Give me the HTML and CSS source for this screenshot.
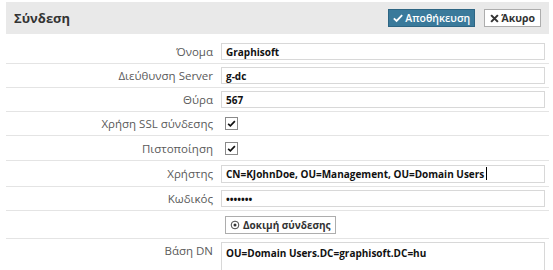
FILE: index.html
```html
<!DOCTYPE html>
<html lang="el">
<head>
<meta charset="utf-8">
<link rel="stylesheet" href="styles.css">
</head>
<body>
<div class="panel">
  <div class="header">
    <div class="title">Σύνδεση</div>
    <div class="actions">
      <button class="btn btn-primary"><svg class="ico" viewBox="0 0 12 12" width="10" height="10"><path d="M1 6.5 L4.3 9.6 L11 2.6" fill="none" stroke="currentColor" stroke-width="2.2"/></svg>Αποθήκευση</button>
      <button class="btn btn-default"><svg class="ico" viewBox="0 0 12 12" width="9" height="9"><path d="M1.5 1.5 L10.5 10.5 M10.5 1.5 L1.5 10.5" fill="none" stroke="currentColor" stroke-width="2.8"/></svg>Άκυρο</button>
    </div>
  </div>
  <div class="form">
    <div class="row">
      <div class="label">Όνομα</div>
      <div class="field"><div class="input">Graphisoft</div></div>
    </div>
    <div class="row">
      <div class="label">Διεύθυνση Server</div>
      <div class="field"><div class="input">g-dc</div></div>
    </div>
    <div class="row">
      <div class="label">Θύρα</div>
      <div class="field"><div class="input">567</div></div>
    </div>
    <div class="row">
      <div class="label">Χρήση SSL σύνδεσης</div>
      <div class="field"><span class="check"><svg viewBox="0 0 12 12" width="9" height="9"><path d="M1.5 6.5 L4.5 9.2 L10.5 2.8" fill="none" stroke="currentColor" stroke-width="2.2"/></svg></span></div>
    </div>
    <div class="row row-25">
      <div class="label">Πιστοποίηση</div>
      <div class="field"><span class="check"><svg viewBox="0 0 12 12" width="9" height="9"><path d="M1.5 6.5 L4.5 9.2 L10.5 2.8" fill="none" stroke="currentColor" stroke-width="2.2"/></svg></span></div>
    </div>
    <div class="row row-26">
      <div class="label">Χρήστης</div>
      <div class="field"><div class="input input-focus">CN=KJohnDoe, OU=Management, OU=Domain Users<span class="caret"></span></div></div>
    </div>
    <div class="row">
      <div class="label">Κωδικός</div>
      <div class="field"><div class="input pw">•••••••</div></div>
    </div>
    <div class="row row-btn">
      <div class="label"></div>
      <div class="field"><button class="btn btn-default btn-test"><svg class="ico" viewBox="0 0 12 12" width="10" height="10"><circle cx="6" cy="6" r="4.6" fill="none" stroke="currentColor" stroke-width="1.1"/><circle cx="6" cy="6" r="1.8" fill="currentColor"/></svg>Δοκιμή σύνδεσης</button></div>
    </div>
    <div class="row row-last">
      <div class="label">Βάση DN</div>
      <div class="field"><div class="input textarea">OU=Domain Users.DC=graphisoft.DC=hu</div></div>
    </div>
  </div>
</div>
</body>
</html>
```

FILE: styles.css
```css
html, body {
  margin: 0;
  padding: 0;
  background: #fff;
  font-family: "Open Sans", "Noto Sans", sans-serif;
  color: #333;
  overflow: hidden;
}
.panel {
  padding: 2px 4px 0 6px;
}
.header {
  height: 32px;
  background: #e9e9e9;
  display: flex;
  align-items: center;
  justify-content: space-between;
  padding: 0 8px 0 8px;
}
.title {
  font-size: 13px;
  font-weight: 700;
  color: #333;
}
.actions {
  display: flex;
  gap: 9px;
}
.btn {
  font-family: "Open Sans", "Noto Sans", sans-serif;
  font-size: 10.5px;
  font-weight: 700;
  height: 18px;
  padding: 0 5px;
  display: inline-flex;
  align-items: center;
  gap: 2px;
  border: 1px solid #adadad;
  background: #fff;
  color: #333;
  line-height: 1;
  cursor: pointer;
}
.btn-primary {
  background: #3a7a9b;
  border-color: #2d6583;
  color: #fff;
  font-weight: 600;
  padding: 0 4px;
}
.ico {
  display: block;
  flex: none;
}
.form {
  display: flex;
  flex-direction: column;
  padding-top: 6px;
}
.row {
  display: grid;
  grid-template-columns: 207px 1fr;
  column-gap: 8px;
  align-items: center;
  box-sizing: border-box;
  height: 24px;
  border-bottom: 1px solid #e4e4e4;
}
.row-25 { height: 25px; }
.row-26 { height: 26px; }
.label {
  text-align: right;
  font-size: 11.5px;
  color: #5a5a5a;
}
.field {
  display: flex;
  align-items: center;
  padding-right: 4px;
}
.input {
  flex: 1;
  height: 17px;
  border: 1px solid #d8d8d8;
  box-sizing: border-box;
  display: flex;
  align-items: center;
  padding: 0 4px;
  font-size: 10px;
  font-weight: 700;
  color: #111;
  white-space: nowrap;
}
.input-focus {
  height: 18px;
}
.pw {
  font-size: 10px;
}
.caret {
  display: inline-block;
  width: 1px;
  height: 13px;
  background: #000;
  margin-left: 2px;
}
.check {
  margin-left: 4px;
  width: 11px;
  height: 11px;
  border: 1px solid #8a8a8a;
  display: flex;
  align-items: center;
  justify-content: center;
  color: #111;
}
.row-btn {
  height: 28px;
}
.btn-test {
  margin-left: 4px;
  gap: 3px;
  padding: 0 4px;
  font-size: 10px;
}
.row-last {
  border-bottom: none;
  height: 40px;
  align-items: start;
  padding-top: 3px;
}
.row-last .label {
  padding-top: 1px;
}
.textarea {
  height: 40px;
  align-items: flex-start;
  padding-top: 3px;
}
```
